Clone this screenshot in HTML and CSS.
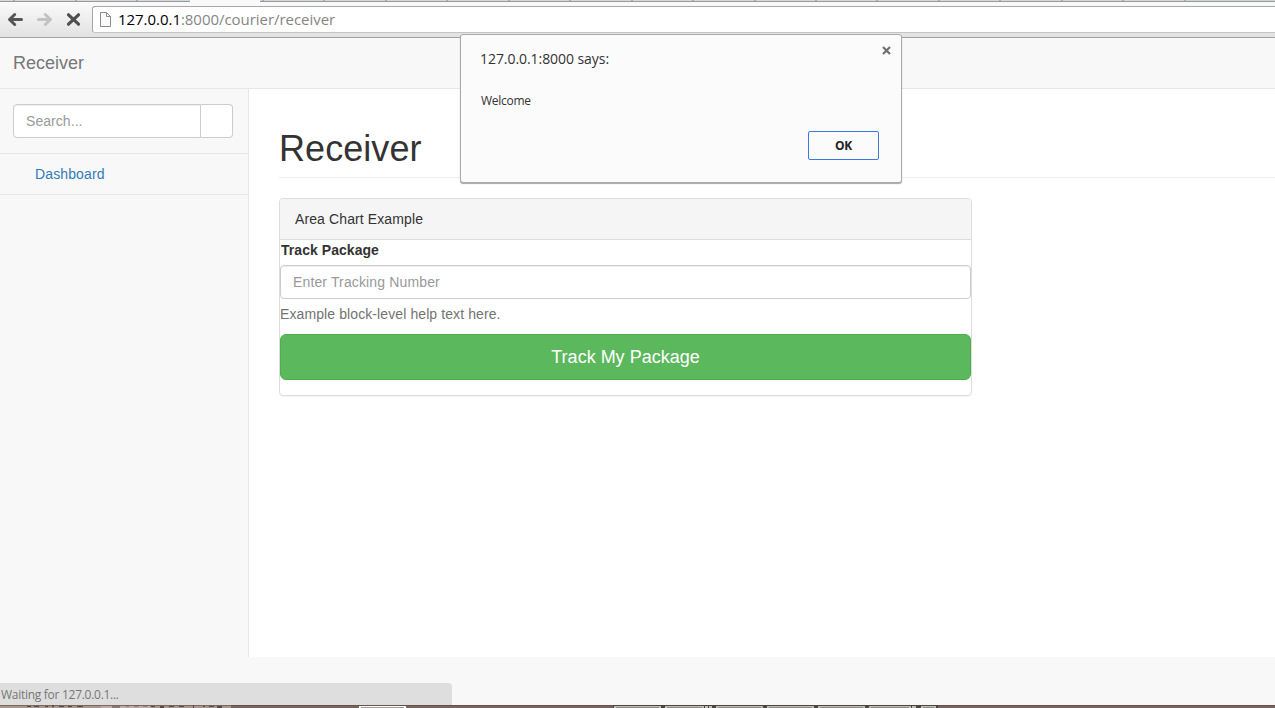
FILE: index.html
```html
<!DOCTYPE html>
<html lang="en">
<head>
<meta charset="utf-8">
<title>Receiver</title>
<link rel="stylesheet" href="styles.css">
</head>
<body>
<div class="window">
  <header class="chrome">
    <div class="tabs"><div class="tab-active"></div><div class="tab-list"></div><div class="tab-rest"></div></div>
    <div class="toolbar">
      <svg class="nav-icons" width="92" height="35" viewBox="0 0 92 35" fill="none" stroke-width="3" stroke-linecap="round" stroke-linejoin="round">
        <path stroke="#555" d="M21.500 17.500H10M14.700 12.500L9.500 17.500L14.700 22.500"/>
        <path stroke="#c2c2c2" d="M38.500 17.500H50M45.300 12.500L50.500 17.500L45.300 22.500"/>
        <path stroke="#4f4f4f" stroke-width="3.200" d="M68.500 12.800L78.500 22.200M78.500 12.800L68.500 22.200"/>
      </svg>
      <div class="omnibox">
        <svg width="13" height="16" viewBox="0 0 13 16" fill="#fafafa" stroke="#8b8b8b"><path d="M1.500 .5H7.500L11.500 4.500V14.500H1.500ZM7.500 .5V4.500H11.500"/></svg>
        <span class="url"><b>127.0.0.1</b>:8000/courier/receiver</span>
      </div>
    </div>
  </header>
  <nav class="navbar"><a class="brand">Receiver</a></nav>
  <div class="body">
    <aside class="sidebar">
      <div class="search"><div class="search-input">Search...</div><div class="search-btn"></div></div>
      <a class="side-link">Dashboard</a>
    </aside>
    <main class="page">
      <h1>Receiver</h1>
      <section class="panel">
        <div class="panel-heading">Area Chart Example</div>
        <label class="label">Track Package</label>
        <div class="field">Enter Tracking Number</div>
        <p class="help">Example block-level help text here.</p>
        <div class="submit">Track My Package</div>
      </section>
    </main>
  </div>
  <footer class="footer"><div class="status"><span>Waiting for 127.0.0.1...</span></div></footer>
  <div class="desktop">
    <svg width="1275" height="3" viewBox="0 0 1275 3">
      <path fill="#75665f" d="M0 0H1275V3H0Z"/>
      <path fill="#a8978f" d="M0 0H231V3H0Z"/>
      <path fill="#50443f" d="M0 0H1275V1H0Z" opacity=".55"/>
      <path fill="#574a45" d="M27 1h4v1h-4zM34 1h5v1h-5zM45 1h3v1h-3zM52 0h2v2h-2zM59 1h5v1h-5zM68 1h4v1h-4zM77 1h6v1h-6zM126 1h3v1h-3zM134 1h5v1h-5zM143 1h4v1h-4zM151 1h4v1h-4zM160 1h4v2h-4zM169 1h5v1h-5zM179 1h5v1h-5zM193 0h1v3h-1zM203 1h2v1h-2zM209 1h5v1h-5zM217 1h5v2h-5z"/>
      <path fill="#cfc4bf" d="M101 1h49v2h-49z" opacity=".5"/>
      <path fill="#857872" d="M112 1h8v2h-8z"/>
      <path fill="#fff" d="M359 1H406V3H359Z"/><path fill="#a49993" d="M361 2H404V3H361Z"/>
      <path fill="#4b453f" d="M613 0H938V3H613Z"/>
      <path fill="#c0beb2" d="M614 1h47v2h-47zM665 1h39v2h-39zM705 1h3v2h-3zM709 1h3v2h-3zM716 1h47v2h-47zM767 1h47v2h-47zM818 1h47v2h-47zM869 1h42v2h-42zM912 1h4v2h-4zM921 1h15v2h-15z"/>
      <path fill="#8f8e83" d="M616 2h43v1h-43zM667 2h35v1h-35zM718 2h43v1h-43zM769 2h43v1h-43zM820 2h43v1h-43zM871 2h38v1h-38zM923 2h11v1h-11z"/>
    </svg>
  </div>
  <div class="dialog">
    <div class="dialog-head"><span class="dialog-title">127.0.0.1:8000 says:</span>
      <svg width="9" height="9" viewBox="0 0 9 9" stroke="#707070" stroke-width="2.200"><path d="M1 1L8 8M8 1L1 8"/></svg>
    </div>
    <div class="dialog-text"><span>Welcome</span></div>
    <div class="dialog-actions"><div class="ok"><span>OK</span></div></div>
  </div>
</div>
</body>
</html>
```
FILE: styles.css
```css
* { box-sizing: border-box; }
body { margin: 0; background: #f8f8f8; color: #333; font: 14px/20px "Liberation Sans", Arial, sans-serif; overflow: hidden; }
.window { position: relative; width: 1275px; height: 708px; display: flex; flex-direction: column; }
svg { display: block; flex: none; }
.chrome { height: 38px; }
.tabs { height: 2px; display: flex; padding-left: 190px; border-bottom: 1px solid #979a9b; background: repeating-linear-gradient(90deg, #d2dadf 0 13px, #a9b0b4 13px 15px, #d2dadf 15px 61.5px); }
.tab-active { width: 70px; height: 2px; background: #f8f8f8; }
.tab-list { flex: 1; background: repeating-linear-gradient(90deg, #d2dadf 0 2px, #a9b0b4 2px 4px, #d2dadf 4px 61.45px); }
.tab-rest { width: 89px; background: #d3d3d1; }
.toolbar { height: 36px; display: flex; background: linear-gradient(#f9faf9, #e2e2e2); border-bottom: 1px solid #a2a2a2; }
.omnibox { margin-top: 4px; flex: 1; height: 27px; border: 1px solid #a7a7a7; border-bottom-color: #c4c4c4; border-right: 0; border-radius: 3px 0 0 3px; background: #fff; display: flex; align-items: center; padding-left: 6px; gap: 6px; }
.url { font: 15px/24px "Open Sans", "Noto Sans", sans-serif; color: #858585; letter-spacing: -.04px; white-space: nowrap; padding-bottom: 2px; }
.url b { font-weight: 400; color: #000; }
.navbar { height: 51px; padding: 15px 13px; border-bottom: 1px solid #e7e7e7; background: #f8f8f8; }
.brand { font-size: 18px; color: #777; display: block; }
.body { height: 568px; display: flex; }
.sidebar { width: 249px; border-right: 1px solid #e7e7e7; }
.search { height: 65px; padding: 15px 15px 15px 13px; display: flex; border-bottom: 1px solid #e7e7e7; }
.search-input { width: 188px; height: 34px; border: 1px solid #ccc; border-radius: 4px 0 0 4px; background: #fff; padding: 6px 12px; color: #999; letter-spacing: .06px; box-shadow: inset 0 1px 1px rgba(0,0,0,.075); }
.search-btn { width: 32px; height: 34px; border: 1px solid #ccc; border-left: 0; border-radius: 0 4px 4px 0; background: #fff; }
.side-link { display: block; height: 41px; padding: 10px 35px; color: #337ab7; letter-spacing: .13px; border-bottom: 1px solid #e7e7e7; }
.page { flex: 1; background: #fff; padding: 40px 0 0 30px; }
h1 { margin: 0 0 20px; height: 49px; font-size: 36px; line-height: 39px; font-weight: 400; letter-spacing: .06px; border-bottom: 1px solid #eee; }
.panel { width: 693px; height: 198px; border: 1px solid #ddd; border-radius: 4px; box-shadow: 0 1px 1px rgba(0,0,0,.05); }
.panel-heading { height: 41px; padding: 10px 15px; background: #f5f5f5; border-bottom: 1px solid #ddd; border-radius: 3px 3px 0 0; letter-spacing: .11px; }
.label { display: block; height: 25px; padding-left: 1px; line-height: 21px; font-weight: 700; letter-spacing: .05px; }
.field { height: 34px; border: 1px solid #ccc; border-radius: 4px; padding: 6px 12px; color: #999; letter-spacing: .14px; box-shadow: inset 0 1px 1px rgba(0,0,0,.075); }
.help { margin: 5px 0 10px; color: #737373; letter-spacing: .1px; }
.submit { height: 46px; border: 1px solid #4cae4c; border-radius: 6px; background: #5cb85c; color: #fff; font-size: 18px; line-height: 44px; text-align: center; }
.footer { height: 48px; display: flex; align-items: flex-end; }
.status { width: 452px; height: 22px; background: #dedede; border-radius: 0 4px 0 0; padding-left: 1px; color: #777; font: 12px/23px "Open Sans", "Noto Sans", sans-serif; letter-spacing: -.28px; }
.desktop { height: 3px; }
.dialog { position: absolute; left: 460px; top: 34px; width: 442px; height: 149px; background: #fbfbfb; border: 1px solid #aaa; border-radius: 3px; box-shadow: 0 1px 1px rgba(0,0,0,.35); padding: 11px 10px 0 19px; font-family: "Open Sans", "Noto Sans", sans-serif; }
.dialog-head { display: flex; justify-content: space-between; height: 44px; }
.dialog-title { font-size: 14px; line-height: 26px; letter-spacing: -.06px; }
.dialog-text { font-size: 12px; line-height: 21px; height: 41px; padding-left: 1px; letter-spacing: -.28px; }
.dialog-actions { display: flex; justify-content: flex-end; padding-right: 12px; }
.ok { width: 71px; height: 29px; border: 1px solid #3c78e0; border-radius: 2px; text-align: center; font-size: 12px; font-weight: 700; line-height: 27px; letter-spacing: -.2px; color: #222; }
```
